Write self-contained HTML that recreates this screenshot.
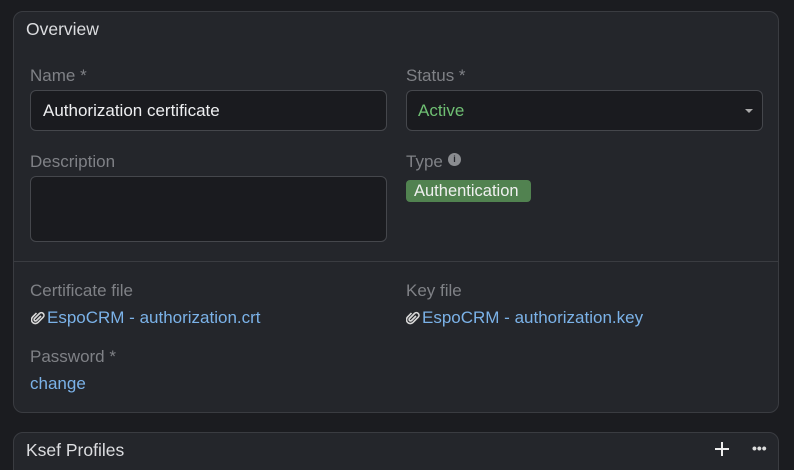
<!DOCTYPE html>
<html><head><style>
html,body{margin:0;width:794px;height:470px;overflow:hidden}
body{background:#1b1c20;font-family:"Liberation Sans",sans-serif;font-size:17px;position:relative}
.panel{position:absolute;left:13px;width:766px;background:#24262b;border:1px solid #3a3c41;border-radius:10px;box-sizing:border-box}
.t{position:absolute;white-space:nowrap}
.lbl{color:#7f8186}
.in{position:absolute;background:#1a1b1f;border:1px solid #45474c;border-radius:6px;box-sizing:border-box}
.link{color:#7bb2e8;display:flex;align-items:center;gap:2px}
</style></head><body>
<div class="panel" style="top:11px;height:402px"></div>
<div class="t" style="left:26px;top:19px;color:#dcdde0;font-size:17.5px">Overview</div>
<div class="t lbl" style="left:30px;top:66px">Name *</div>
<div class="in" style="left:30px;top:90px;width:357px;height:41px"></div>
<div class="t" style="left:43px;top:101px;color:#eeeff1">Authorization certificate</div>
<div class="t lbl" style="left:406px;top:66px">Status *</div>
<div class="in" style="left:406px;top:90px;width:357px;height:41px"></div>
<div class="t" style="left:418px;top:101px;color:#6fbf73">Active</div>
<div style="position:absolute;left:745px;top:109px;border:4px solid transparent;border-top:4px solid #aaa;border-bottom:0"></div>
<div class="t lbl" style="left:30px;top:152px">Description</div>
<div class="in" style="left:30px;top:176px;width:357px;height:66px"></div>
<div class="t lbl" style="left:406px;top:152px">Type</div>
<div style="position:absolute;left:448px;top:153px;width:13px;height:13px;border-radius:50%;background:#8a8c90;color:#24262b;font-size:9px;font-weight:bold;text-align:center;line-height:13px">i</div>
<div style="position:absolute;left:406px;top:180px;width:125px;height:22px;background:#518250;border-radius:4px"></div>
<div class="t" style="left:414px;top:182px;color:#f0f0f0;font-size:16.5px">Authentication</div>
<div style="position:absolute;left:14px;top:261px;width:764px;height:1px;background:#3a3c41"></div>
<div class="t lbl" style="left:30px;top:281px">Certificate file</div>
<div class="t link" style="left:31px;top:308px"><svg width="14" height="14" viewBox="0 0 14 14"><path d="M10 5 L5.5 9.5 a1.4 1.4 0 0 1-2-2 L8.5 2.5 a2.6 2.6 0 0 1 3.7 3.7 L7 11.4 a3.8 3.8 0 0 1-5.4-5.4 L5.5 2" fill="none" stroke="#d8d8d8" stroke-width="1.6"/></svg>EspoCRM - authorization.crt</div>
<div class="t lbl" style="left:406px;top:281px">Key file</div>
<div class="t link" style="left:406px;top:308px"><svg width="14" height="14" viewBox="0 0 14 14"><path d="M10 5 L5.5 9.5 a1.4 1.4 0 0 1-2-2 L8.5 2.5 a2.6 2.6 0 0 1 3.7 3.7 L7 11.4 a3.8 3.8 0 0 1-5.4-5.4 L5.5 2" fill="none" stroke="#d8d8d8" stroke-width="1.6"/></svg>EspoCRM - authorization.key</div>
<div class="t lbl" style="left:30px;top:347px">Password *</div>
<div class="t link" style="left:30px;top:374px">change</div>
<div class="panel" style="top:432px;height:50px"></div>
<div class="t" style="left:26px;top:440px;color:#dcdde0;font-size:17.5px">Ksef Profiles</div>
<svg style="position:absolute;left:715px;top:442px" width="14" height="14"><path d="M7 0V14M0 7H14" stroke="#eee" stroke-width="2"/></svg>
<div class="t" style="left:752px;top:440px;color:#ddd;font-size:14px;font-weight:bold">&bull;&bull;&bull;</div>
</body></html>
